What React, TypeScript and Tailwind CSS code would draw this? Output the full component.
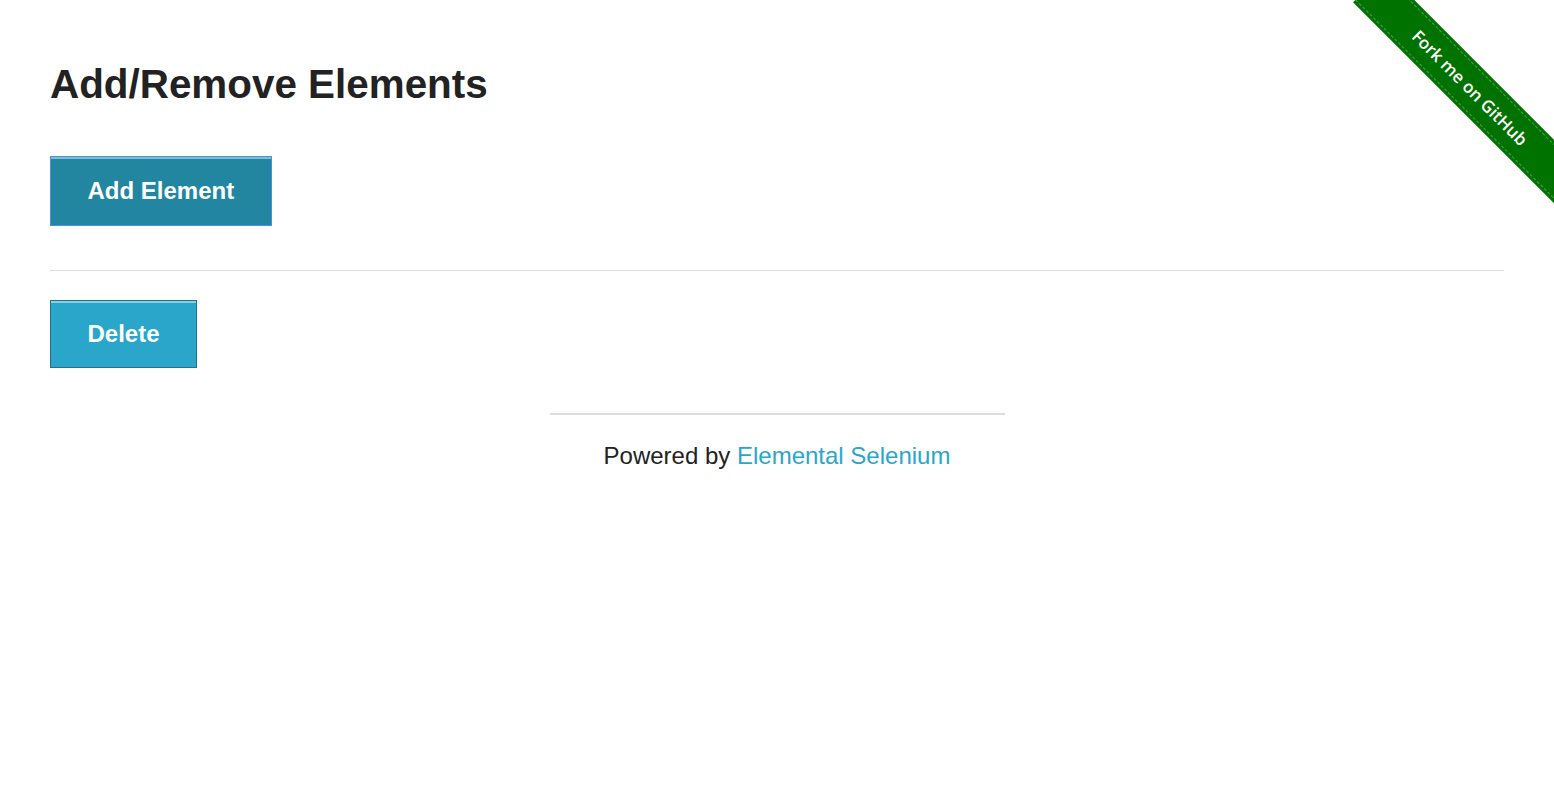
import React from "react";

export default function App() {
  return (
    <div className="relative min-h-[794px] overflow-hidden bg-white font-['Liberation_Sans',Arial,sans-serif] text-[#222222]">
      {/* Fork me ribbon */}
      <div className="absolute right-0 top-0 h-[210px] w-[210px] overflow-hidden">
        <div className="absolute left-[-19px] top-[70px] flex h-[45px] w-[300px] rotate-45 items-center justify-center bg-[#007200] pr-[14px]">
          <div className="absolute inset-x-0 top-[3px] border-t border-dashed border-white/30" />
          <div className="absolute inset-x-0 bottom-[3px] border-t border-dashed border-white/30" />
          <span className="font-['Open_Sans',sans-serif] text-[17px] font-semibold leading-none text-white">
            Fork me on GitHub
          </span>
        </div>
      </div>

      <div className="px-[50px] pt-[60px]">
        <h3 className="text-[40.4px] font-bold leading-[48px] text-[#222222]">Add/Remove Elements</h3>
        <div className="mt-[48px]">
          <button className="box-border flex h-[70px] items-center border border-[#4a8fe6] bg-[#2286a1] px-[36.5px] text-[24px] font-bold text-white shadow-[inset_0_2px_0_rgba(255,255,255,0.45)]">
            Add Element
          </button>
        </div>
        <hr className="mt-[44px] border-0 border-t border-[#dddddd]" />
        <div className="mt-[29px]">
          <button className="box-border flex h-[68px] items-center border border-[#1e728c] bg-[#2ba6cb] px-[36.5px] text-[24px] font-bold text-white shadow-[inset_0_2px_0_rgba(255,255,255,0.45)]">
            Delete
          </button>
        </div>
      </div>

      <div className="mx-auto mt-[45px] w-[455px] border-t-2 border-[#dddddd] pt-[23px] text-center">
        <p className="text-[24px] leading-[36px] text-[#222222]">
          Powered by <a className="text-[#2ba6cb]" href="#">Elemental Selenium</a>
        </p>
      </div>
    </div>
  );
}
